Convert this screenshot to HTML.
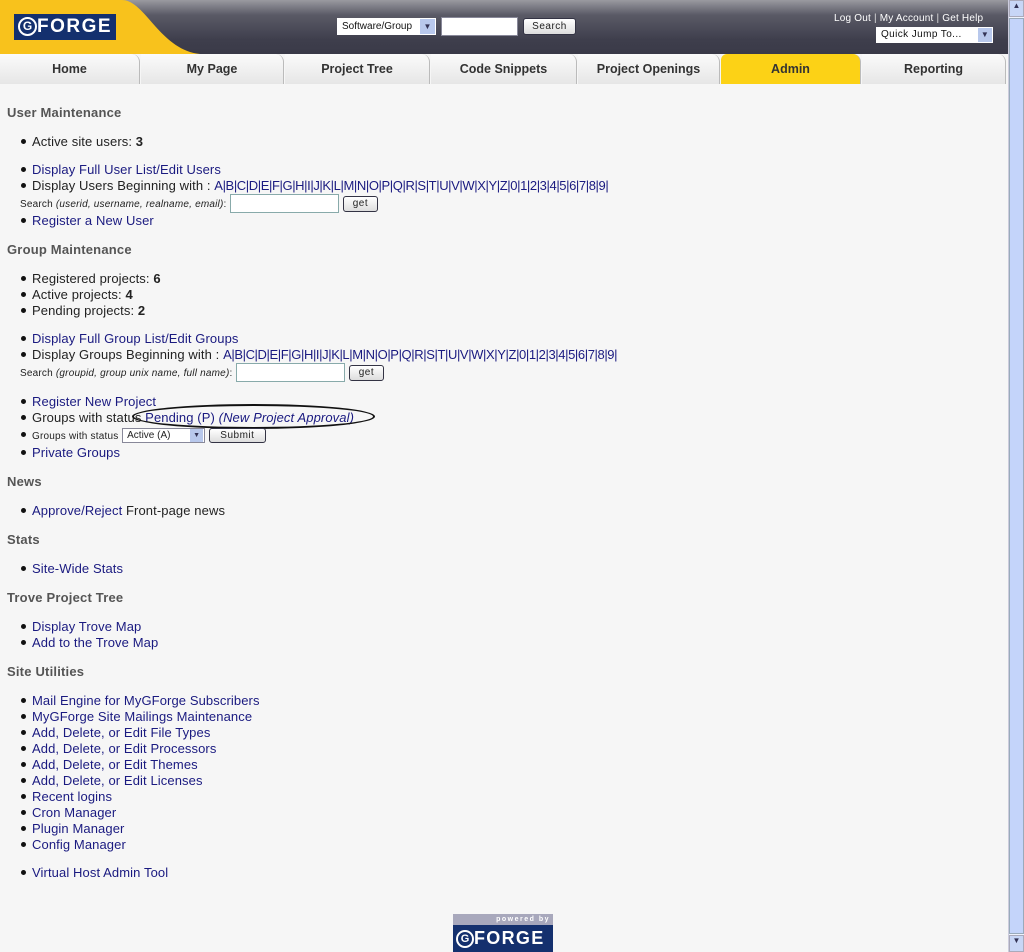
<!DOCTYPE html>
<html><head><style>
*{margin:0;padding:0;box-sizing:border-box}
body{width:1024px;height:952px;overflow:hidden;background:#f6f6f6;font-family:"Liberation Sans",sans-serif;position:relative;color:#222}
#hdr{position:absolute;left:0;top:0;width:1008px;height:54px;background:linear-gradient(#9a9aa0 0,#5a5a66 15px,#3e3e4c 40px,#3a3a48 54px)}
#tabs{position:absolute;left:0;top:54px;width:1008px;height:30px;background:#f6f6f6}
.tab{position:absolute;top:0;height:30px;background:linear-gradient(#fbfbfb,#e6e6e6);border-right:1px solid #bbb;border-top-right-radius:8px;font:bold 12.5px "Liberation Sans",sans-serif;color:#333;text-align:center;line-height:30px}
.l{position:absolute;left:7px;font-size:13px;line-height:16px;letter-spacing:.1px;white-space:nowrap;margin-top:1px}
.li{left:21px}
.li:before{content:"";display:inline-block;width:5px;height:5px;border-radius:50%;background:#111;margin-right:6px;vertical-align:middle;position:relative;top:-1px}
.h{font-weight:bold;color:#555;letter-spacing:.2px}
a{color:#1a1a80;text-decoration:none}
.s{font-size:10px;letter-spacing:.2px}
.in{display:inline-block;width:109px;height:19px;background:#fff;border:1px solid #8aa;vertical-align:middle}
.btn{display:inline-block;height:16px;border:1px solid #334;border-radius:3px;background:linear-gradient(#fff,#ddd);font-size:10px;line-height:14px;text-align:center;vertical-align:middle;letter-spacing:.5px}
.al{letter-spacing:-.4px}
#sb{position:absolute;right:0;top:0;width:16px;height:952px;background:#eef2fc;border-left:1px solid #ccd}
</style></head><body>
<div id="hdr">
 <svg width="210" height="54" style="position:absolute;left:0;top:0"><path d="M0 0H122C145 0 160 50 200 54H0Z" fill="#f8c21c"/></svg>
 <div style="position:absolute;left:14px;top:14px;width:102px;height:26px;background:#14306e;color:#fff;font:bold 19px 'Liberation Sans',sans-serif;line-height:26px;letter-spacing:1.5px;padding-left:4px"><span style="display:inline-block;width:19px;height:19px;border:2px solid #fff;border-radius:50%;font-size:12px;line-height:15px;text-align:center;vertical-align:2px;letter-spacing:0">G</span>FORGE</div>
 <div style="position:absolute;left:337px;top:18px;width:99px;height:17px;background:#fff;font-size:10px;line-height:17px;padding-left:5px;color:#111">Software/Group<span style="position:absolute;right:1px;top:1px;width:15px;height:15px;background:#b8c8ec;font-size:8px;text-align:center;line-height:15px;color:#335">▼</span></div>
 <div style="position:absolute;left:441px;top:17px;width:77px;height:19px;background:#fff;border:1px solid #889"></div>
 <div class="btn" style="position:absolute;left:523px;top:18px;width:53px;height:17px;line-height:15px">Search</div>
 <div style="position:absolute;left:834px;top:13px;font-size:10px;color:#fff;letter-spacing:.2px">Log Out <span style="color:#ddd">|</span> My Account <span style="color:#ddd">|</span> Get Help</div>
 <div style="position:absolute;left:876px;top:27px;width:117px;height:16px;background:#fff;font-size:10px;line-height:16px;padding-left:5px;color:#111;letter-spacing:.4px">Quick Jump To...<span style="position:absolute;right:1px;top:1px;width:14px;height:14px;background:#b8c8ec;font-size:8px;text-align:center;line-height:14px;color:#335">▼</span></div>
</div>
<div id="tabs">
 <div class="tab" style="left:0;width:140px">Home</div>
 <div class="tab" style="left:141px;width:143px">My Page</div>
 <div class="tab" style="left:285px;width:145px">Project Tree</div>
 <div class="tab" style="left:431px;width:146px">Code Snippets</div>
 <div class="tab" style="left:578px;width:142px">Project Openings</div>
 <div class="tab" style="left:721px;width:140px;background:#fcd216;border-top-left-radius:6px">Admin</div>
 <div class="tab" style="left:862px;width:144px">Reporting</div>
</div>

<div class="l h" style="top:104px">User Maintenance</div>
<div class="l li" style="top:133px">Active site users: <b>3</b></div>
<div class="l li" style="top:161px"><a>Display Full User List/Edit Users</a></div>
<div class="l li" style="top:177px">Display Users Beginning with : <a class="al">A|B|C|D|E|F|G|H|I|J|K|L|M|N|O|P|Q|R|S|T|U|V|W|X|Y|Z|0|1|2|3|4|5|6|7|8|9|</a></div>
<div class="l" style="top:193px;left:20px"><span class="s">Search <i>(userid, username, realname, email)</i>:</span> <span class="in"></span> <span class="btn" style="width:35px">get</span></div>
<div class="l li" style="top:212px"><a>Register a New User</a></div>

<div class="l h" style="top:241px">Group Maintenance</div>
<div class="l li" style="top:270px">Registered projects: <b>6</b></div>
<div class="l li" style="top:286px">Active projects: <b>4</b></div>
<div class="l li" style="top:302px">Pending projects: <b>2</b></div>
<div class="l li" style="top:330px"><a>Display Full Group List/Edit Groups</a></div>
<div class="l li" style="top:346px">Display Groups Beginning with : <a class="al">A|B|C|D|E|F|G|H|I|J|K|L|M|N|O|P|Q|R|S|T|U|V|W|X|Y|Z|0|1|2|3|4|5|6|7|8|9|</a></div>
<div class="l" style="top:362px;left:20px"><span class="s">Search <i>(groupid, group unix name, full name)</i>:</span> <span class="in"></span> <span class="btn" style="width:35px">get</span></div>
<div class="l li" style="top:393px"><a>Register New Project</a></div>
<div class="l li" style="top:409px">Groups with status <a>Pending (P) <i>(New Project Approval)</i></a></div>
<div style="position:absolute;left:132px;top:404px;width:243px;height:25px;border:2px solid #111;border-radius:50%"></div>
<div class="l li" style="top:426px"><span class="s">Groups with status</span> <span style="display:inline-block;width:83px;height:15px;background:#fff;border:1px solid #889;font-size:10px;line-height:13px;padding-left:4px;vertical-align:middle;position:relative;letter-spacing:0">Active (A)<span style="position:absolute;right:1px;top:0;width:13px;height:13px;background:#b8c8ec;font-size:7px;text-align:center;color:#335">▼</span></span> <span class="btn" style="width:57px;height:15px;line-height:13px">Submit</span></div>
<div class="l li" style="top:444px"><a>Private Groups</a></div>

<div class="l h" style="top:473px">News</div>
<div class="l li" style="top:502px"><a>Approve/Reject</a> Front-page news</div>
<div class="l h" style="top:531px">Stats</div>
<div class="l li" style="top:560px"><a>Site-Wide Stats</a></div>
<div class="l h" style="top:589px">Trove Project Tree</div>
<div class="l li" style="top:618px"><a>Display Trove Map</a></div>
<div class="l li" style="top:634px"><a>Add to the Trove Map</a></div>
<div class="l h" style="top:663px">Site Utilities</div>
<div class="l li" style="top:692px"><a>Mail Engine for MyGForge Subscribers</a></div>
<div class="l li" style="top:708px"><a>MyGForge Site Mailings Maintenance</a></div>
<div class="l li" style="top:724px"><a>Add, Delete, or Edit File Types</a></div>
<div class="l li" style="top:740px"><a>Add, Delete, or Edit Processors</a></div>
<div class="l li" style="top:756px"><a>Add, Delete, or Edit Themes</a></div>
<div class="l li" style="top:772px"><a>Add, Delete, or Edit Licenses</a></div>
<div class="l li" style="top:788px"><a>Recent logins</a></div>
<div class="l li" style="top:804px"><a>Cron Manager</a></div>
<div class="l li" style="top:820px"><a>Plugin Manager</a></div>
<div class="l li" style="top:836px"><a>Config Manager</a></div>
<div class="l li" style="top:864px"><a>Virtual Host Admin Tool</a></div>

<div style="position:absolute;left:453px;top:914px;width:100px;height:38px">
 <div style="height:11px;background:#a8a8bc;color:#fff;font-size:7px;font-weight:bold;text-align:right;padding-right:3px;letter-spacing:1.5px;line-height:11px">powered by</div>
 <div style="height:27px;background:#14306e;color:#fff;font:bold 18px 'Liberation Sans',sans-serif;line-height:27px;padding-left:3px;letter-spacing:1.3px"><span style="display:inline-block;width:18px;height:18px;border:2px solid #fff;border-radius:50%;font-size:11px;line-height:14px;text-align:center;vertical-align:2px;letter-spacing:0">G</span>FORGE</div>
</div>

<div id="sb">
 <div style="position:absolute;left:0;top:0;width:15px;height:17px;background:#c8d6f6;border:1px solid #aab;font-size:8px;text-align:center;color:#335">▲</div>
 <div style="position:absolute;left:0;top:18px;width:15px;height:916px;background:#c4d4fa;border:1px solid #9ab"></div>
 <div style="position:absolute;left:0;top:935px;width:15px;height:17px;background:#c8d6f6;border:1px solid #aab;font-size:8px;text-align:center;color:#335">▼</div>
</div>
</body></html>
